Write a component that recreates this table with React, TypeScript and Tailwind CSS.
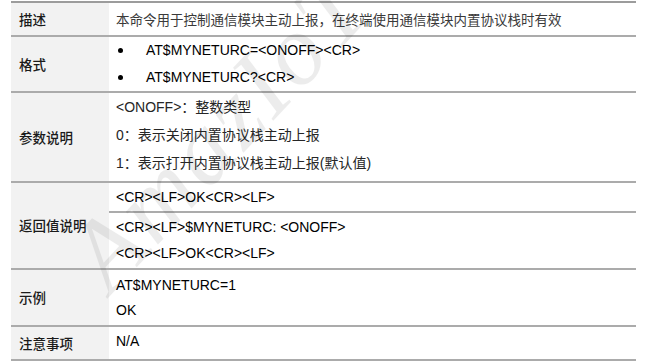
const mixed = "font-['Liberation_Sans','Noto_Sans_CJK_SC',sans-serif]";

function Bullet({ children }: { children: React.ReactNode }) {
  return (
    <div className="flex items-center">
      <span className="ml-[2px] h-[5px] w-[5px] rounded-full bg-black" />
      <span className="ml-[23px]">{children}</span>
    </div>
  );
}

function Row({ label, h, children }: { label: string; h: string; children: React.ReactNode }) {
  return (
    <div className={`flex border-b-2 border-[#ababab] ${h}`}>
      <div className="flex w-[98px] shrink-0 items-center bg-[#f2f2f2] pl-[8px] text-[13.5px] font-medium text-[#1a1a1a]">
        {label}
      </div>
      <div className="flex flex-1 flex-col">{children}</div>
    </div>
  );
}

export default function App() {
  return (
    <div className="relative h-[362px] w-[648px] overflow-hidden bg-white font-['Noto_Sans_CJK_SC',sans-serif]">
      <div className="ml-[11px] mt-[1px] w-[625px] border-t-2 border-[#9c9c9c]">
        <Row label="描述" h="h-[34px]">
          <div className="flex h-full items-center pl-[7px] text-[13.5px] text-[#3a3a3a]">
            本命令用于控制通信模块主动上报，在终端使用通信模块内置协议栈时有效
          </div>
        </Row>
        <Row label="格式" h="h-[56px]">
          <div className={`flex h-full flex-col justify-center pl-[7px] text-[14px] leading-[27px] text-black ${mixed}`}>
            <Bullet>AT$MYNETURC=&lt;ONOFF&gt;&lt;CR&gt;</Bullet>
            <Bullet>AT$MYNETURC?&lt;CR&gt;</Bullet>
          </div>
        </Row>
        <Row label="参数说明" h="h-[90px]">
          <div className={`flex h-full flex-col justify-center pb-[4px] pl-[7px] text-[14px] leading-[28px] text-[#262626] ${mixed}`}>
            <div>&lt;ONOFF&gt;：整数类型</div>
            <div>0：表示关闭内置协议栈主动上报</div>
            <div>1：表示打开内置协议栈主动上报(默认值)</div>
          </div>
        </Row>
        <Row label="返回值说明" h="h-[87px]">
          <div className={`flex h-[30px] items-center border-b-2 border-[#ababab] pl-[7px] text-[14px] text-black ${mixed}`}>
            &lt;CR&gt;&lt;LF&gt;OK&lt;CR&gt;&lt;LF&gt;
          </div>
          <div className={`flex flex-1 flex-col justify-center pb-[2px] pl-[7px] text-[14px] leading-[26px] text-black ${mixed}`}>
            <div>&lt;CR&gt;&lt;LF&gt;$MYNETURC: &lt;ONOFF&gt;</div>
            <div>&lt;CR&gt;&lt;LF&gt;OK&lt;CR&gt;&lt;LF&gt;</div>
          </div>
        </Row>
        <Row label="示例" h="h-[57px]">
          <div className={`flex h-full flex-col justify-center pl-[7px] text-[14px] leading-[25px] text-black ${mixed}`}>
            <div>AT$MYNETURC=1</div>
            <div>OK</div>
          </div>
        </Row>
        <Row label="注意事项" h="h-[34px]">
          <div className={`flex h-full items-center pb-[4px] pl-[7px] text-[14px] text-black ${mixed}`}>
            N/A
          </div>
        </Row>
      </div>
      <div className="pointer-events-none absolute left-[25px] top-[80px] rotate-[-47deg] whitespace-nowrap font-['Liberation_Serif',serif] text-[100px] italic leading-none tracking-[4px] text-black opacity-[0.07]">
        AmazIoT
      </div>
    </div>
  );
}
